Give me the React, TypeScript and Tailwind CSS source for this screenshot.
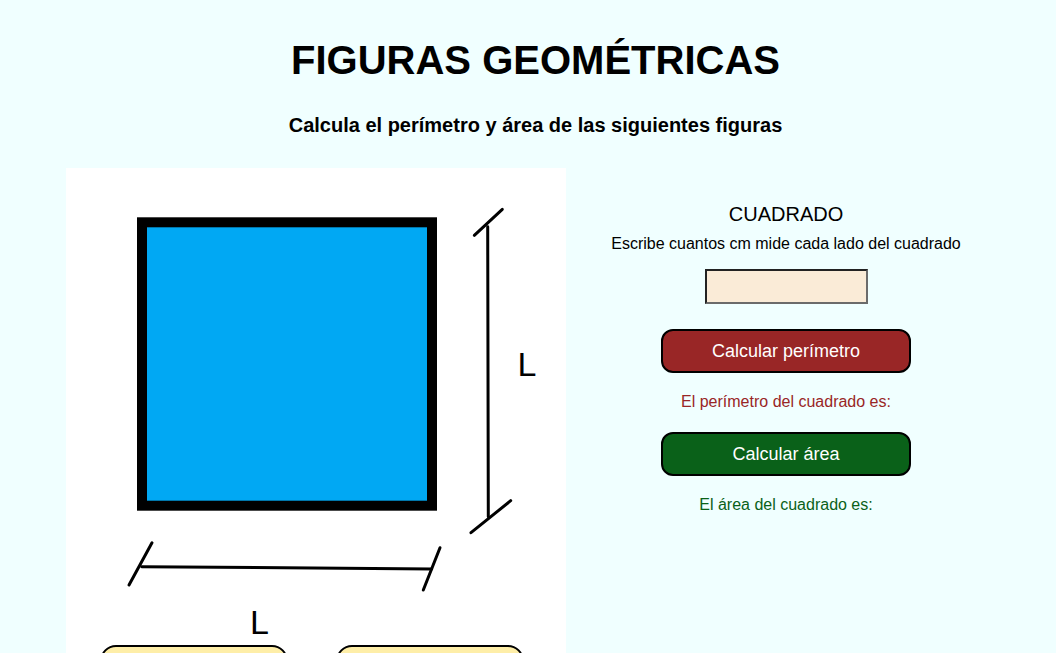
import React from "react";

export default function App() {
  return (
    <div
      className="min-h-[653px] w-full bg-[#f0ffff] text-black overflow-hidden"
      style={{ fontFamily: '"Liberation Sans", Arial, sans-serif' }}
    >
      <h1 className="pt-[37px] pl-[15px] text-center text-[40px] leading-[46px] font-bold">
        FIGURAS GEOMÉTRICAS
      </h1>
      <h3 className="mt-[31px] pl-[15px] text-center text-[20px] leading-[23px] font-bold">
        Calcula el perímetro y área de las siguientes figuras
      </h3>
      <div className="mt-[31px] flex pl-[66px]">
        <div className="w-[500px] bg-white flex flex-col pb-[40px]">
          <svg width="500" height="477" viewBox="0 0 500 477">
            <rect x="76" y="54.3" width="290" height="283.4" fill="#01a8f3" stroke="#000" strokeWidth="10" />
            <g stroke="#000" strokeWidth="3" strokeLinecap="round" fill="none">
              <line x1="421.7" y1="58.7" x2="422.3" y2="348.7" />
              <line x1="408.3" y1="67.3" x2="436.3" y2="41.3" />
              <line x1="405" y1="364.7" x2="444.7" y2="332.7" />
              <line x1="75.7" y1="398.7" x2="365.7" y2="401" />
              <line x1="63" y1="417" x2="86" y2="374.7" />
              <line x1="357.3" y1="422" x2="374" y2="379.7" />
            </g>
            <text x="451.6" y="208" fontSize="34" fontFamily='"Liberation Sans", Arial, sans-serif' fill="#000">L</text>
            <text x="184" y="466.3" fontSize="34" fontFamily='"Liberation Sans", Arial, sans-serif' fill="#000">L</text>
          </svg>
          <div className="flex pl-[34px] gap-[48px]">
            <div className="w-[188px] h-[44px] rounded-[16px] border-2 border-black bg-[#feeea8]" />
            <div className="w-[188px] h-[44px] rounded-[16px] border-2 border-black bg-[#feeea8]" />
          </div>
        </div>
        <div className="w-[440px] flex flex-col items-center pt-[35px]">
          <div className="text-[20px] leading-[23px]">CUADRADO</div>
          <div className="mt-[9px] text-[16px] leading-[18px]">
            Escribe cuantos cm mide cada lado del cuadrado
          </div>
          <input
            type="text"
            className="mt-[16px] w-[163px] h-[35px] bg-[#faebd7] border-2 border-t-[#222] border-l-[#222] border-b-[#6b6b6b] border-r-[#6b6b6b] outline-none"
          />
          <button className="mt-[25px] w-[250px] h-[44px] rounded-[12px] border-2 border-black bg-[#992626] text-white text-[18px] leading-[20px]">
            Calcular perímetro
          </button>
          <div className="mt-[20px] text-[16px] leading-[18px] text-[#992626]">
            El perímetro del cuadrado es:
          </div>
          <button className="mt-[21px] w-[250px] h-[44px] rounded-[12px] border-2 border-black bg-[#0a6119] text-white text-[18px] leading-[20px]">
            Calcular área
          </button>
          <div className="mt-[20px] text-[16px] leading-[18px] text-[#0a6119]">
            El área del cuadrado es:
          </div>
        </div>
      </div>
    </div>
  );
}
